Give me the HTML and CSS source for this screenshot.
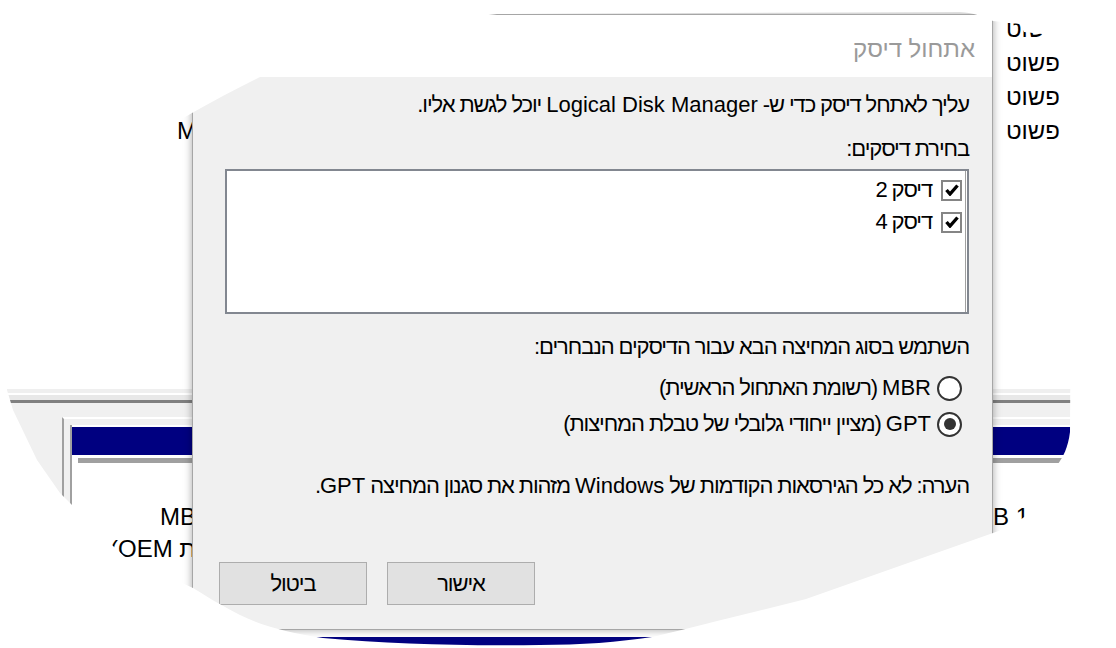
FILE: index.html
```html
<!DOCTYPE html>
<html lang="he">
<head>
    <meta charset="UTF-8">
    <title>אתחול דיסק</title>
    <link rel="stylesheet" href="styles.css">
</head>
<body>
    <div class="screen">
        <div class="mmc">
            <div class="vol-list">
                <div class="vol-row"><span class="vol-size" dir="rtl">499 MB</span><span>פשוט</span></div>
                <div class="vol-row"><span class="vol-size" dir="rtl">450 MB</span><span>פשוט</span></div>
                <div class="vol-row"><span class="vol-size" dir="rtl">100 MB</span><span>פשוט</span></div>
                <div class="vol-row"><span class="vol-size" dir="rtl">MB</span><span>פשוט</span></div>
            </div>
            <div class="graph">
                <div class="band band-a"></div>
                <div class="band band-b"></div>
                <div class="band band-c"></div>
                <div class="band band-rule"></div>
                <div class="band band-d"></div>
                <div class="disk">
                    <div class="disk-card">
                        <div class="partition">
                            <div class="part-head"></div>
                            <div class="part-sep"></div>
                            <div class="part-body" dir="ltr">
                                <div class="part part-a" dir="rtl">
                                    <div class="part-size">450 MB</div>
                                    <div>תקין (מחיצת OEM)</div>
                                </div>
                                <div class="part part-b"></div>
                                <div class="part part-c" dir="rtl">
                                    <div>16 MB</div>
                                </div>
                            </div>
                            <div class="part-head next"></div>
                        </div>
                    </div>
                </div>
            </div>
        </div>

        <div class="dialog" dir="rtl">
            <div class="dlg-title">אתחול דיסק</div>
            <div class="dlg-body">
                <div class="line">עליך לאתחל דיסק כדי ש- <span class="latin">Logical Disk Manager</span> יוכל לגשת אליו.</div>
                <div class="line pick-label">בחירת דיסקים:</div>
                <div class="disk-list">
                    <div class="disk-list-inner">
                        <div class="disk-item">
                            <span class="check"><svg width="14" height="12" viewBox="0 0 14 12"><path d="M1.5 6 L5 10 L12.5 1.5" fill="none" stroke="#000" stroke-width="3.4"/></svg></span>
                            <span>דיסק 2</span>
                        </div>
                        <div class="disk-item">
                            <span class="check"><svg width="14" height="12" viewBox="0 0 14 12"><path d="M1.5 6 L5 10 L12.5 1.5" fill="none" stroke="#000" stroke-width="3.4"/></svg></span>
                            <span>דיסק 4</span>
                        </div>
                    </div>
                </div>
                <div class="line style-label">השתמש בסוג המחיצה הבא עבור הדיסקים הנבחרים:</div>
                <div class="scheme">
                    <div class="scheme-opt"><span class="radio"></span><span><span class="latin">MBR</span> (רשומת האתחול הראשית)</span></div>
                    <div class="scheme-opt"><span class="radio on"></span><span><span class="latin">GPT</span> (מציין ייחודי גלובלי של טבלת המחיצות)</span></div>
                </div>
                <div class="line note">הערה: לא כל הגירסאות הקודמות של <span class="latin">Windows</span> מזהות את סגנון המחיצה <span class="latin">GPT</span>.</div>
                <div class="actions">
                    <button class="btn">אישור</button>
                    <button class="btn">ביטול</button>
                </div>
            </div>
        </div>

        <svg class="vignette" width="1116" height="648" viewBox="0 0 1116 648">
            <path fill="#fff" fill-rule="evenodd" d="M0 0H1116V648H0Z
                M497 14 L960 12 C975 13 985 17 993 21 L1020 24 L1024 32 L1042 34 L1046 40 L1062 44 C1068 48 1072 60 1072 90
                L1070 432 C1068 448 1063 457 1058 464 L1027 515 C1015 524 1004 529 993 533
                L806 599 L713 622 C690 628 670 633 652 637 C620 642 580 645 540 645 C460 646 390 644 323 638
                C290 633 262 626 240 615 C222 606 206 596 193 588 L125 557 L112 545 L77 510 L60 493 L37 460 L13 410 L7 390
                C15 300 70 200 150 140 C165 128 180 120 192 113 C215 100 238 88 260 77 C320 45 420 22 497 14 Z"/>
        </svg>
    </div>
</body>
</html>
```

FILE: styles.css
```css
* {
    box-sizing: border-box;
}
body {
    margin: 0;
    background: #fff;
    font-family: "Liberation Sans", "DejaVu Sans", sans-serif;
    font-size: 22px;
    color: #000;
}
.screen {
    position: relative;
    width: 1116px;
    height: 648px;
    overflow: hidden;
}

/* disk management window behind the dialog */
.mmc {
    position: absolute;
    left: 0;
    top: 0;
    width: 1116px;
    height: 648px;
    background: #fff;
    font-size: 24px;
}
.vol-list {
    height: 388px;
    padding-top: 12px;
}
.vol-row {
    display: flex;
    justify-content: space-between;
    height: 34px;
    line-height: 34px;
    padding: 0 56px 0 177px;
}
.band-a {
    margin-top: 1px;
    height: 4px;
    background: #efefef;
}
.band-b {
    height: 2px;
    background: #fff;
}
.band-c {
    height: 5px;
    background: #e8e8e8;
}
.band-rule {
    height: 3px;
    background: #808080;
}
.band-d {
    height: 14px;
    background: #f0f0f0;
}
.disk {
    background: #f0f0f0;
    padding-left: 62px;
}
.disk-card {
    border-left: 2px solid #a0a0a0;
    border-top: 2px solid #fff;
    padding: 6px 0 0 6px;
}
.partition {
    border-left: 2px solid #a0a0a0;
    padding-top: 2px;
    background: #fff;
}
.part-head {
    height: 28px;
    background: #000080;
}
.part-sep {
    margin-left: 6px;
    height: 8px;
    border-top: 3px solid #fff;
    background: #a0a0a0;
}
.part-body {
    display: flex;
    height: 174px;
    padding-top: 38px;
    line-height: 32px;
}
.part-a {
    width: 240px;
    padding-left: 38px;
    text-align: left;
}
.part-size {
    padding-left: 50px;
}
.part-b {
    width: 661px;
}
.part-c {
    flex: 1;
    text-align: left;
}
.part-head.next {
    height: 12px;
}

/* initialize disk dialog */
.dialog {
    position: absolute;
    left: 192px;
    top: 14px;
    width: 801px;
    height: 616px;
    border: 1px solid #a6a6a6;
    background: #f0f0f0;
    box-shadow: 0 0 8px rgba(0, 0, 0, 0.35);
    display: flex;
    flex-direction: column;
}
.dlg-title {
    height: 62px;
    background: #fff;
    padding: 6px 17px 0 0;
    font-size: 24px;
    line-height: 56px;
    color: #9a9a9a;
}
.dlg-body {
    flex: 1;
    padding: 15px 23px 0 26px;
    letter-spacing: -1.1px;
}
.latin {
    letter-spacing: 0;
}
.line {
    line-height: 26px;
}
.pick-label {
    margin-top: 18px;
}
.disk-list {
    margin: 7px 0 0 6px;
    height: 145px;
    border: 2px solid #828790;
    background: #fff;
}
.disk-list-inner {
    height: 100%;
    margin-right: 1px;
    border-right: 1px solid #a0a0a0;
    padding: 3px 3px 0 0;
}
.disk-item {
    display: flex;
    align-items: center;
    gap: 9px;
    height: 32px;
    line-height: 26px;
}
.check {
    width: 21px;
    height: 21px;
    border: 2px solid #858585;
    background: #fff;
    display: flex;
    align-items: center;
    justify-content: center;
}
.style-label {
    margin-top: 20px;
}
.scheme {
    margin-top: 10px;
    padding-right: 7px;
}
.scheme-opt {
    display: flex;
    align-items: center;
    gap: 6px;
    height: 36px;
    line-height: 26px;
}
.radio {
    width: 25px;
    height: 25px;
    border: 2px solid #333;
    border-radius: 50%;
    background: #fff;
    display: flex;
    align-items: center;
    justify-content: center;
}
.radio.on::after {
    content: "";
    width: 12px;
    height: 12px;
    border-radius: 50%;
    background: #333;
}
.note {
    margin-top: 31px;
}
.actions {
    margin-top: 63px;
    display: flex;
    justify-content: flex-end;
    gap: 20px;
}
.btn {
    width: 148px;
    height: 43px;
    border: 1px solid #adadad;
    background: #e1e1e1;
    font: inherit;
    letter-spacing: inherit;
    color: #000;
    padding: 0;
}

.vignette {
    position: absolute;
    left: 0;
    top: 0;
    pointer-events: none;
}
```
